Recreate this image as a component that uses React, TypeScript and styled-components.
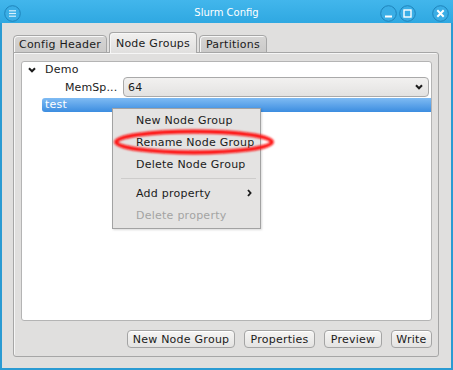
import React from 'react'
import styled, { createGlobalStyle } from 'styled-components'

const GlobalStyle = createGlobalStyle`
  html, body {
    margin: 0;
    padding: 0;
    background: #2b9bd3;
  }
  body {
    font-family: 'DejaVu Sans', Verdana, sans-serif;
    font-size: 11px;
    letter-spacing: 0.25px;
    color: #1b1b1b;
  }
`

const Frame = styled.div`
  position: relative;
  width: 453px;
  height: 370px;
  display: flex;
  flex-direction: column;
  overflow: hidden;
`

const TitleBar = styled.div`
  height: 23px;
  flex: none;
  display: grid;
  grid-template-columns: 1fr auto 1fr;
  align-items: center;
  padding: 0 4px;
  background: linear-gradient(#42b6ec, #2fa8e1);
`

const TitleText = styled.div`
  color: #ffffff;
  font-size: 10px;
  letter-spacing: 0;
  padding-top: 1px;
`

const LeftControls = styled.div`
  display: flex;
  justify-content: flex-start;
`

const RightControls = styled.div`
  display: flex;
  justify-content: flex-end;
  gap: 2px;
`

const CloseGap = styled.div`
  width: 12px;
`

const CtlIcon = styled.svg`
  width: 17px;
  height: 17px;
  display: block;
  margin-top: 3px;
`

const Body = styled.div`
  flex: 1;
  display: flex;
  flex-direction: column;
  background: #e0dfde;
  border: 2px solid #2b9bd3;
  border-top: none;
  padding: 10px 12px 11px 11px;
`

const TabBar = styled.div`
  height: 20px;
  display: flex;
  align-items: flex-end;
  gap: 2px;
  margin-bottom: -1px;
  position: relative;
  z-index: 1;
`

const Tab = styled.div<{ $active?: boolean; $w: number }>`
  width: ${p => p.$w}px;
  height: ${p => (p.$active ? 21 : 18)}px;
  box-sizing: border-box;
  border: 1px solid #a6a6a6;
  border-bottom: ${p => (p.$active ? 'none' : '1px solid #a6a6a6')};
  border-radius: 4px 4px 0 0;
  background: ${p =>
    p.$active ? 'linear-gradient(#f1f0ef, #e0dfde)' : 'linear-gradient(#d6d5d4, #cbcac9)'};
  box-shadow: inset 1px 1px 0 #f7f7f7;
  display: flex;
  align-items: center;
  justify-content: center;
  padding-top: ${p => (p.$active ? 0 : 1)}px;
  white-space: nowrap;
  color: #1b1b1b;
`

const Pane = styled.div`
  flex: 1;
  box-sizing: border-box;
  border: 1px solid #a6a6a6;
  border-radius: 0 3px 3px 3px;
  box-shadow: inset 1px 1px 0 #f6f6f6;
  padding: 8px 6px 7px 7px;
  display: flex;
  flex-direction: column;
`

const TreeArea = styled.div`
  height: 260px;
  box-sizing: border-box;
  background: #ffffff;
  border: 1px solid #b4b4b4;
  border-radius: 3px;
  display: flex;
  flex-direction: column;
`

const TreeRow = styled.div<{ $h: number }>`
  height: ${p => p.$h}px;
  display: flex;
  align-items: center;
`

const Arrow = styled.svg`
  width: 8px;
  height: 6px;
  margin-left: 6px;
  margin-right: 9px;
`

const Label = styled.div`
  width: 54px;
  margin-left: 43px;
  margin-right: 4px;
  white-space: nowrap;
  letter-spacing: 0.1px;
`

const Combo = styled.div`
  flex: 1;
  height: 20px;
  box-sizing: border-box;
  margin-right: 2px;
  border: 1px solid #a9a9a9;
  border-radius: 4px;
  background: linear-gradient(#f2f1f0, #e3e2e1);
  display: flex;
  align-items: center;
  justify-content: space-between;
  padding: 0 5px 0 4px;
`

const Selected = styled.div`
  flex: 1;
  height: 14px;
  margin-left: 20px;
  margin-top: 1px;
  border-radius: 3px 0 0 3px;
  background: linear-gradient(#7fbbf3, #3c8de0);
  color: #ffffff;
  padding-left: 3px;
  line-height: 13px;
`

const ButtonRow = styled.div`
  margin-top: 9px;
  display: flex;
  justify-content: flex-end;
  gap: 9px;
`

const Button = styled.div<{ $w: number }>`
  width: ${p => p.$w}px;
  height: 18px;
  box-sizing: border-box;
  border: 1px solid #a4a4a4;
  border-radius: 4px;
  background: linear-gradient(#f6f5f4, #e4e3e2);
  box-shadow: inset 0 1px 0 #ffffff;
  display: flex;
  align-items: center;
  justify-content: center;
  white-space: nowrap;
`

const Menu = styled.div`
  position: absolute;
  left: 112px;
  top: 108px;
  width: 149px;
  box-sizing: border-box;
  background: #e4e3e2;
  border: 1px solid #a2a2a2;
  box-shadow: 1px 1px 2px rgba(0, 0, 0, 0.15);
  padding-bottom: 2px;
  display: flex;
  flex-direction: column;
`

const MenuItem = styled.div<{ $disabled?: boolean }>`
  height: 22px;
  display: flex;
  align-items: center;
  justify-content: space-between;
  padding: 0 8px 0 23px;
  white-space: nowrap;
  color: ${p => (p.$disabled ? '#a3a3a3' : '#1b1b1b')};
`

const MenuSep = styled.div`
  height: 1px;
  margin: 3px 4px 3px 8px;
  background: #cdcccb;
`

const Ring = styled.svg`
  position: absolute;
  left: 113px;
  top: 128px;
  width: 164px;
  height: 28px;
  overflow: visible;
`

function Chevron({ color = '#1b1b1b' }: { color?: string }) {
  return (
    <svg width="8" height="6" viewBox="0 0 8 6">
      <path d="M1 1.2 L4 4.3 L7 1.2" fill="none" stroke={color} strokeWidth="2" />
    </svg>
  )
}

function CircleBtn({ kind }: { kind: 'menu' | 'min' | 'max' | 'close' }) {
  return (
    <CtlIcon viewBox="0 0 17 17">
      <circle cx="8.5" cy="8.5" r="7.8" fill="#3aaee6" stroke="#1f84bb" strokeWidth="1" />
      {kind === 'menu' && (
        <g stroke="#d9f0fb" strokeWidth="1.2">
          <path d="M5 5.8 H12" />
          <path d="M5 8.5 H12" />
          <path d="M5 11.2 H12" />
        </g>
      )}
      {kind === 'min' && <path d="M5 11.5 H12" stroke="#ffffff" strokeWidth="2" />}
      {kind === 'max' && <rect x="5" y="5" width="7" height="7" fill="none" stroke="#ffffff" strokeWidth="1.4" />}
      {kind === 'close' && (
        <path d="M5.3 5.3 L11.7 11.7 M11.7 5.3 L5.3 11.7" stroke="#ffffff" strokeWidth="2" />
      )}
    </CtlIcon>
  )
}

export default function App() {
  return (
    <>
      <GlobalStyle />
      <Frame>
        <TitleBar>
          <LeftControls>
            <CircleBtn kind="menu" />
          </LeftControls>
          <TitleText>Slurm Config</TitleText>
          <RightControls>
            <CircleBtn kind="min" />
            <CircleBtn kind="max" />
            <CloseGap />
            <CircleBtn kind="close" />
          </RightControls>
        </TitleBar>
        <Body>
          <TabBar>
            <Tab $w={94}>Config Header</Tab>
            <Tab $w={88} $active>Node Groups</Tab>
            <Tab $w={68}>Partitions</Tab>
          </TabBar>
          <Pane>
            <TreeArea>
              <TreeRow $h={15}>
                <Arrow viewBox="0 0 8 6">
                  <path d="M1 1.2 L4 4.3 L7 1.2" fill="none" stroke="#1b1b1b" strokeWidth="2" />
                </Arrow>
                Demo
              </TreeRow>
              <TreeRow $h={20}>
                <Label>MemSp...</Label>
                <Combo>
                  <span>64</span>
                  <Chevron />
                </Combo>
              </TreeRow>
              <TreeRow $h={15}>
                <Selected>test</Selected>
              </TreeRow>
            </TreeArea>
            <ButtonRow>
              <Button $w={108}>New Node Group</Button>
              <Button $w={71}>Properties</Button>
              <Button $w={58}>Preview</Button>
              <Button $w={41}>Write</Button>
            </ButtonRow>
          </Pane>
        </Body>
        <Menu>
          <MenuItem>New Node Group</MenuItem>
          <MenuItem>Rename Node Group</MenuItem>
          <MenuItem>Delete Node Group</MenuItem>
          <MenuSep />
          <MenuItem>
            Add property
            <svg width="5" height="8" viewBox="0 0 5 8">
              <path d="M1 1 L3.6 4 L1 7" fill="none" stroke="#1b1b1b" strokeWidth="1.8" />
            </svg>
          </MenuItem>
          <MenuItem $disabled>Delete property</MenuItem>
        </Menu>
        <Ring viewBox="0 0 164 28">
          <defs>
            <filter id="soft" x="-10%" y="-30%" width="120%" height="160%">
              <feGaussianBlur stdDeviation="0.8" />
            </filter>
          </defs>
          <ellipse cx="81" cy="14" rx="78" ry="10.5" fill="none" stroke="#ff0c0c" strokeWidth="3.8" filter="url(#soft)" />
        </Ring>
      </Frame>
    </>
  )
}
